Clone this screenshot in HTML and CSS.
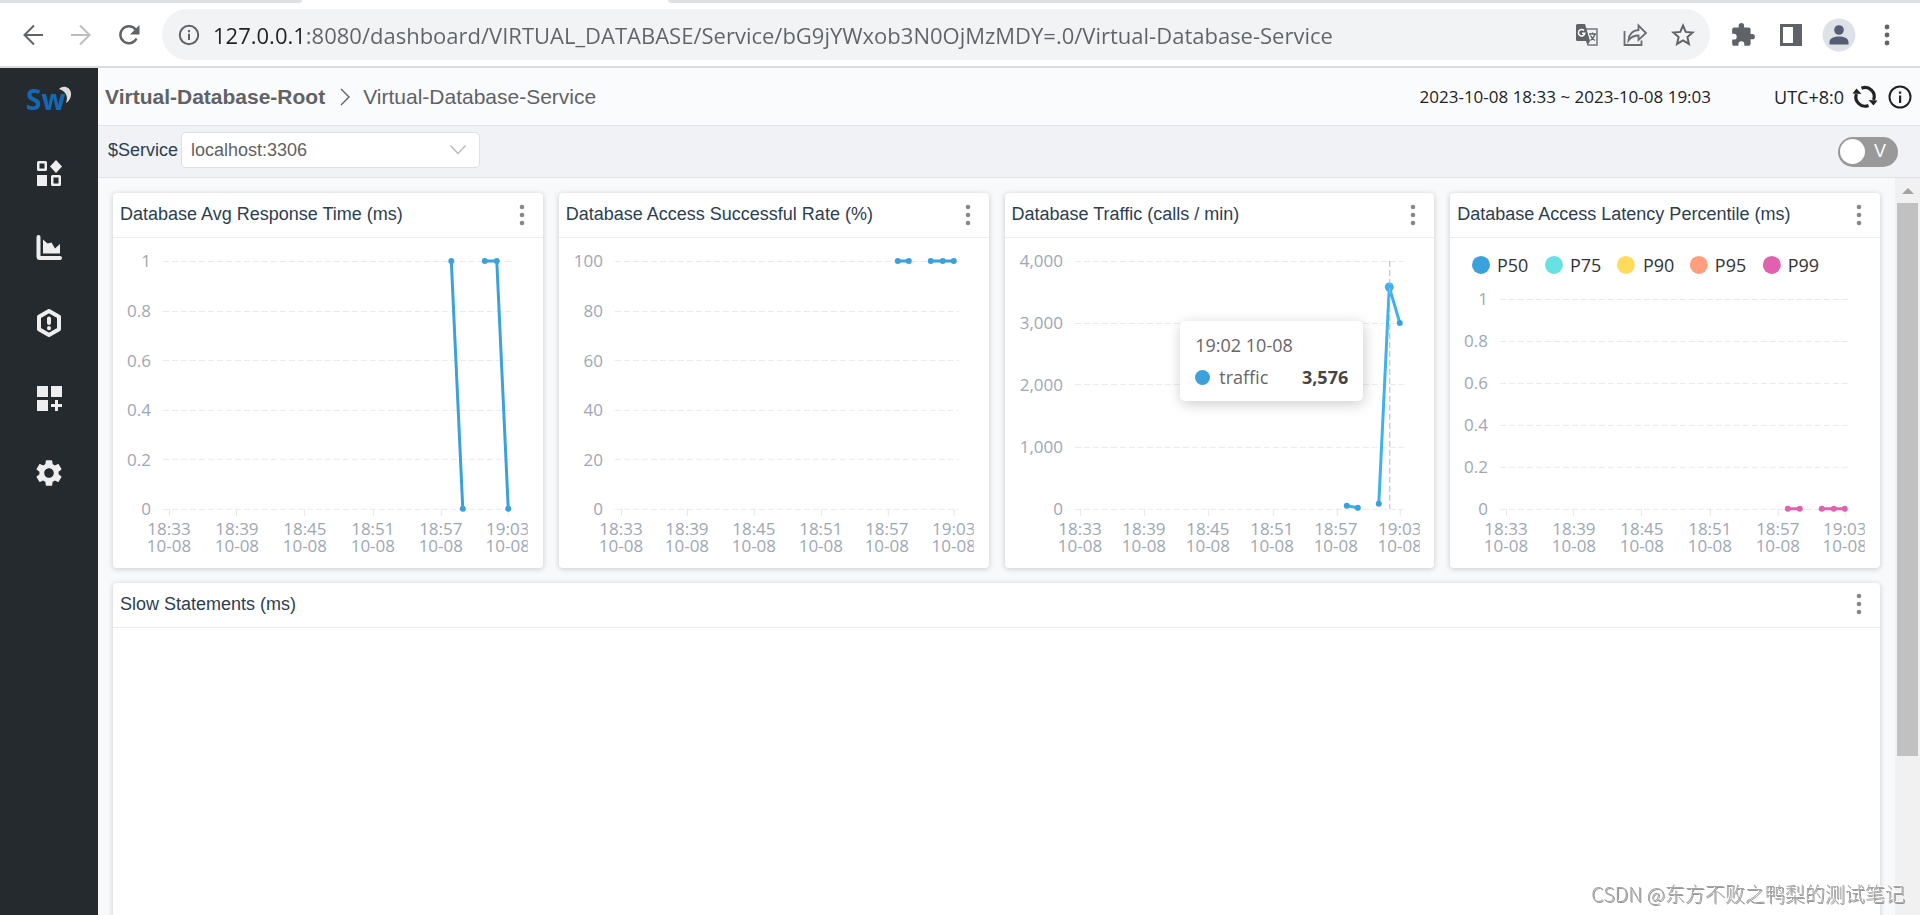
FILE: index.html
```html
<!DOCTYPE html>
<html lang="en">
<head>
<meta charset="utf-8">
<title>Virtual-Database-Service</title>
<link rel="stylesheet" href="styles.css">
</head>
<body>
<header class="browser">
  <div class="tabstrip"><div class="tab-side tab-left"></div><div class="tab-active"></div><div class="tab-side tab-right"></div></div>
  <div class="toolbar">
    <button class="tool" aria-label="Back"><svg width="24" height="24" viewBox="0 0 24 24" fill="none" stroke="#5f6368" stroke-width="2"><path d="M22 12H4M13 2.500L3.500 12l9.500 9.500"/></svg></button>
    <button class="tool" aria-label="Forward"><svg width="24" height="24" viewBox="0 0 24 24" fill="none" stroke="#bcbec1" stroke-width="2"><path d="M2 12h18M11 2.500L20.500 12 11 21.500"/></svg></button>
    <button class="tool" aria-label="Reload"><svg width="26" height="26" viewBox="0 0 26 26"><path d="M20.500 16.500A8.500 8.500 0 1 1 19.500 7.500" fill="none" stroke="#5f6368" stroke-width="2.400"/><path d="M23.500 3v9.500H14z" fill="#5f6368"/></svg></button>
    <div class="omnibox">
      <svg width="24" height="24" viewBox="0 0 24 24"><circle cx="12" cy="12" r="9.200" fill="none" stroke="#5f6368" stroke-width="2"/><path d="M11 10.800h2V17h-2zM11 7h2v2.200h-2z" fill="#5f6368"/></svg>
      <input class="url" aria-label="Address" value="127.0.0.1:8080/dashboard/VIRTUAL_DATABASE/Service/bG9jYWxob3N0OjMzMDY=.0/Virtual-Database-Service">
      <button class="tool" aria-label="Translate"><svg width="24" height="24" viewBox="0 0 24 24"><path d="M11 6h11v16H12.500" fill="none" stroke="#73777b" stroke-width="1.500"/><path d="M2.500 1H10l5 17H2.500A1.500 1.500 0 0 1 1 16.500v-14A1.500 1.500 0 0 1 2.500 1z" fill="#5f6368"/><path d="M15 18l-2.500 4.500L11 18z" fill="#5f6368"/><path d="M9 7.600a3.200 3.200 0 1 0 .8 2.600H7" fill="none" stroke="#fff" stroke-width="1.500"/><path d="M14 11h7M17.500 9.500V11M20 11c-.6 3-2.500 5-4.500 6.500M15.500 12.500c1 2.500 2.500 4 4.500 5" fill="none" stroke="#5f6368" stroke-width="1.300"/></svg></button>
      <button class="tool" aria-label="Share"><svg width="26" height="26" viewBox="0 0 26 26" fill="none" stroke="#6a6e72" stroke-width="1.800"><path d="M2.500 9v14h17v-4.500"/><path d="M6.500 18.500C7 12.500 10.500 8.500 16.500 8V3.500L24 11l-7.500 7v-4.500c-4.500 0-7.500 1.500-10 5z"/></svg></button>
      <button class="tool" aria-label="Bookmark"><svg width="26" height="26" viewBox="0 0 26 26" fill="none" stroke="#5f6368" stroke-width="2"><path d="M13 3.500l2.700 6.400 6.900.6-5.200 4.600 1.500 6.800-5.900-3.600-5.900 3.600 1.500-6.800-5.200-4.600 6.900-.6z"/></svg></button>
    </div>
    <button class="tool" aria-label="Extensions"><svg width="26" height="26" viewBox="0 0 24 24" fill="#5f6368"><path d="M20.500 11H19V7a2 2 0 0 0-2-2h-4V3.500a2.500 2.500 0 0 0-5 0V5H4a2 2 0 0 0-2 2v3.800h1.500a2.700 2.700 0 0 1 0 5.400H2V20a2 2 0 0 0 2 2h3.800v-1.500a2.700 2.700 0 0 1 5.400 0V22H17a2 2 0 0 0 2-2v-4h1.500a2.500 2.500 0 0 0 0-5z"/></svg></button>
    <button class="tool" aria-label="Side panel"><svg width="22" height="22" viewBox="0 0 22 22"><path d="M0 0h22v22H0zM3 3v16h10V3z" fill="#5f6368" fill-rule="evenodd"/></svg></button>
    <button class="tool" aria-label="Profile"><svg width="34" height="34" viewBox="0 0 34 34"><circle cx="17" cy="17" r="16.500" fill="#dee1e8"/><circle cx="17" cy="12" r="4.800" fill="#545d73"/><path d="M7.500 26.500V24c0-3.800 5-5.500 9.500-5.500s9.500 1.700 9.500 5.500v2.500z" fill="#545d73"/></svg></button>
    <button class="tool" aria-label="Menu"><svg width="8" height="24" viewBox="0 0 8 24" fill="#5f6368"><circle cx="4" cy="4" r="2.400"/><circle cx="4" cy="12" r="2.400"/><circle cx="4" cy="20" r="2.400"/></svg></button>
  </div>
</header>
<div class="app">
  <nav class="sidebar" aria-label="Main">
    <a class="logo" href="#" aria-label="SkyWalking"><svg width="48" height="44" viewBox="0 0 48 44"><text class="logo-text" x="1" y="32">Sw</text><path d="M34 11c4-4 11-2.500 12 4 .4 4-1.500 8-5 10 2.500-6 0-12-7-14z" fill="#dcdcdc"/></svg></a>
    <a class="side-link" href="#" aria-label="Dashboards"><svg width="26" height="26" viewBox="0 0 26 26" fill="#eee"><path d="M2.500 1h7A1.500 1.500 0 0 1 11 2.500v7A1.500 1.500 0 0 1 9.500 11h-7A1.500 1.500 0 0 1 1 9.500v-7A1.500 1.500 0 0 1 2.500 1zM3.500 3.500v5h5v-5z" fill-rule="evenodd"/><path d="M20 0l6 6.500-6 6.500-6-6.500z"/><path d="M1 15h10v11H1z"/><path d="M16.500 15h7a1.500 1.500 0 0 1 1.500 1.500v8a1.500 1.500 0 0 1-1.500 1.500h-7a1.500 1.500 0 0 1-1.500-1.500v-8a1.500 1.500 0 0 1 1.500-1.500zM17.500 17.500v6h5v-6z" fill-rule="evenodd"/></svg></a>
    <a class="side-link" href="#" aria-label="Metrics"><svg width="26" height="26" viewBox="0 0 26 26" fill="#eee"><path d="M2.500 2v19.500a1.500 1.500 0 0 0 1.500 1.500h20" fill="none" stroke="#eee" stroke-width="4" stroke-linecap="round"/><path d="M7 4.500L11.500 8.500l4-1 3.500 6 5-4.500v9.500H7z"/></svg></a>
    <a class="side-link" href="#" aria-label="Alerting"><svg width="26" height="30" viewBox="0 0 26 30"><path d="M13 3l10 5.800v12.400L13 27 3 21.200V8.800z" fill="none" stroke="#eee" stroke-width="4" stroke-linejoin="round"/><path d="M13 10.500v4.500M13 20v.2" stroke="#eee" stroke-width="4" stroke-linecap="round"/></svg></a>
    <a class="side-link" href="#" aria-label="Marketplace"><svg width="26" height="26" viewBox="0 0 26 26" fill="#eee"><path d="M1 1h11v11H1zM15 1h11v11H15zM1 15h11v11H1zM19 15h3v4h4v3h-4v4h-3v-4h-4v-3h4z"/></svg></a>
    <a class="side-link" href="#" aria-label="Settings"><svg width="32" height="32" viewBox="0 0 24 24" fill="#eee"><path d="M19.140 12.940c.04-.3.060-.61.060-.94 0-.32-.02-.64-.07-.94l2.030-1.580c.18-.14.230-.41.120-.61l-1.920-3.320c-.12-.22-.37-.29-.59-.22l-2.390.96c-.5-.38-1.030-.7-1.620-.94l-.36-2.540c-.04-.24-.24-.41-.48-.41h-3.840c-.24 0-.43.170-.47.410l-.36 2.540c-.59.240-1.130.570-1.620.94l-2.390-.96c-.22-.08-.47 0-.59.220L2.740 8.870c-.12.210-.08.470.120.610l2.030 1.580c-.05.300-.09.630-.09.940s.02.640.070.940l-2.030 1.580c-.18.140-.23.410-.12.610l1.920 3.320c.12.220.370.290.590.220l2.390-.96c.5.380 1.030.700 1.620.940l.36 2.540c.05.240.24.410.48.410h3.840c.24 0 .44-.17.470-.41l.36-2.540c.59-.24 1.130-.56 1.620-.94l2.390.96c.22.080.470 0 .590-.22l1.920-3.320c.12-.22.070-.47-.12-.61l-2.010-1.580zM12 15.600c-1.980 0-3.600-1.620-3.600-3.600s1.620-3.600 3.600-3.600 3.600 1.620 3.600 3.600-1.620 3.600-3.600 3.600z"/></svg></a>
  </nav>
  <main class="main">
    <div class="titlebar">
      <a class="crumb-root" href="#">Virtual-Database-Root</a>
      <svg width="12" height="18" viewBox="0 0 12 18" fill="none" stroke="#606266" stroke-width="1.400"><path d="M2 1l8 8-8 8"/></svg>
      <span class="crumb">Virtual-Database-Service</span>
      <span class="range">2023-10-08 18:33 ~ 2023-10-08 19:03</span>
      <span class="utc">UTC+8:0</span>
      <button class="icon-btn" aria-label="Refresh"><svg width="26" height="26" viewBox="0 0 26 26" fill="none" stroke="#222" stroke-width="3.200"><path d="M9.500 4.200A9.200 9.200 0 0 1 21.600 16M16.500 21.500A9.200 9.200 0 0 1 4.400 10"/><path d="M16.500 16l9 .5-4 5zM9.500 10l-9-.5 4-5z" fill="#222" stroke="none"/></svg></button>
      <button class="icon-btn" aria-label="Info"><svg width="24" height="24" viewBox="0 0 24 24"><circle cx="12" cy="12" r="10.500" fill="none" stroke="#222" stroke-width="2"/><path d="M11 10.500h2.200V18H11zM11 6.500h2.200v2.300H11z" fill="#222"/></svg></button>
    </div>
    <div class="filters">
      <label for="service">$Service</label>
      <div class="select-wrap">
        <select id="service" class="select"><option>localhost:3306</option></select>
        <svg class="caret" width="18" height="12" viewBox="0 0 18 12" fill="none" stroke="#b4b8bf" stroke-width="1.300"><path d="M1.500 1.500L9 9.500l7.500-8"/></svg>
      </div>
      <label class="switch"><input type="checkbox" role="switch" aria-label="View mode"><span class="knob"></span><span>V</span></label>
    </div>
    <div class="scroller">
      <div class="board">
        <section class="card">
          <div class="card-head"><h2>Database Avg Response Time (ms)</h2><button class="more" aria-label="More"><svg width="6" height="22" viewBox="0 0 6 22"><circle cx="3" cy="3" r="2.300"/><circle cx="3" cy="11" r="2.300"/><circle cx="3" cy="19" r="2.300"/></svg></button></div>
          <svg class="chart" viewBox="0 0 430 330">
            <path class="grid" d="M50 23.500H398M50 73.500H398M50 122.500H398M50 172.500H398M50 221.500H398M50 271.500H398"/>
            <path class="tick" d="M56.500 271v7M123.500 271v7M191.500 271v7M260.500 271v7M328.500 271v7M395.500 271v7"/>
            <g class="y"><text x="38" y="29">1</text><text x="38" y="79">0.8</text><text x="38" y="129">0.6</text><text x="38" y="178">0.4</text><text x="38" y="228">0.2</text><text x="38" y="277">0</text></g>
            <svg class="x" width="415" height="330"><text><tspan x="56" y="297">18:33</tspan><tspan x="56" y="314">10-08</tspan></text><text><tspan x="124" y="297">18:39</tspan><tspan x="124" y="314">10-08</tspan></text><text><tspan x="192" y="297">18:45</tspan><tspan x="192" y="314">10-08</tspan></text><text><tspan x="260" y="297">18:51</tspan><tspan x="260" y="314">10-08</tspan></text><text><tspan x="328" y="297">18:57</tspan><tspan x="328" y="314">10-08</tspan></text><text><tspan x="395" y="297">19:03</tspan><tspan x="395" y="314">10-08</tspan></text></svg>
            <path class="line blue" d="M338.500 23L350 271M372 23h12L395.500 271"/>
            <g class="dot blue"><circle cx="338.500" cy="23" r="3"/><circle cx="350" cy="271" r="3"/><circle cx="372" cy="23" r="3"/><circle cx="384" cy="23" r="3"/><circle cx="395.500" cy="271" r="3"/></g>
          </svg>
        </section>
        <section class="card">
          <div class="card-head"><h2>Database Access Successful Rate (%)</h2><button class="more" aria-label="More"><svg width="6" height="22" viewBox="0 0 6 22"><circle cx="3" cy="3" r="2.300"/><circle cx="3" cy="11" r="2.300"/><circle cx="3" cy="19" r="2.300"/></svg></button></div>
          <svg class="chart" viewBox="0 0 430 330">
            <path class="grid" d="M56 23.500H400M56 73.500H400M56 122.500H400M56 172.500H400M56 221.500H400M56 271.500H400"/>
            <path class="tick" d="M62.500 271v7M128.500 271v7M195.500 271v7M262.500 271v7M329.500 271v7M395.500 271v7"/>
            <g class="y"><text x="44" y="29">100</text><text x="44" y="79">80</text><text x="44" y="129">60</text><text x="44" y="178">40</text><text x="44" y="228">20</text><text x="44" y="277">0</text></g>
            <svg class="x" width="415" height="330"><text><tspan x="62" y="297">18:33</tspan><tspan x="62" y="314">10-08</tspan></text><text><tspan x="128" y="297">18:39</tspan><tspan x="128" y="314">10-08</tspan></text><text><tspan x="195" y="297">18:45</tspan><tspan x="195" y="314">10-08</tspan></text><text><tspan x="262" y="297">18:51</tspan><tspan x="262" y="314">10-08</tspan></text><text><tspan x="328" y="297">18:57</tspan><tspan x="328" y="314">10-08</tspan></text><text><tspan x="395" y="297">19:03</tspan><tspan x="395" y="314">10-08</tspan></text></svg>
            <path class="line blue" d="M339 23h11M372 23h23"/>
            <g class="dot blue"><circle cx="339" cy="23" r="3"/><circle cx="350" cy="23" r="3"/><circle cx="372" cy="23" r="3"/><circle cx="384" cy="23" r="3"/><circle cx="395" cy="23" r="3"/></g>
          </svg>
        </section>
        <section class="card">
          <div class="card-head"><h2>Database Traffic (calls / min)</h2><button class="more" aria-label="More"><svg width="6" height="22" viewBox="0 0 6 22"><circle cx="3" cy="3" r="2.300"/><circle cx="3" cy="11" r="2.300"/><circle cx="3" cy="19" r="2.300"/></svg></button></div>
          <svg class="chart" viewBox="0 0 430 330">
            <path class="grid" d="M70 23.500H399M70 85.500H399M70 146.500H399M70 209.500H399M70 271.500H399"/>
            <path class="tick" d="M75.500 271v7M139.500 271v7M203.500 271v7M268.500 271v7M332.500 271v7M395.500 271v7"/>
            <g class="y"><text x="58" y="29">4,000</text><text x="58" y="91">3,000</text><text x="58" y="153">2,000</text><text x="58" y="215">1,000</text><text x="58" y="277">0</text></g>
            <svg class="x" width="415" height="330"><text><tspan x="75" y="297">18:33</tspan><tspan x="75" y="314">10-08</tspan></text><text><tspan x="139" y="297">18:39</tspan><tspan x="139" y="314">10-08</tspan></text><text><tspan x="203" y="297">18:45</tspan><tspan x="203" y="314">10-08</tspan></text><text><tspan x="267" y="297">18:51</tspan><tspan x="267" y="314">10-08</tspan></text><text><tspan x="331" y="297">18:57</tspan><tspan x="331" y="314">10-08</tspan></text><text><tspan x="395" y="297">19:03</tspan><tspan x="395" y="314">10-08</tspan></text></svg>
            <path class="line bright" d="M342 268l11 2M374 266L384.500 49 395 85"/>
            <g class="dot blue"><circle cx="342" cy="268" r="3"/><circle cx="353" cy="270" r="3"/><circle cx="374" cy="266" r="3"/><circle cx="395" cy="85" r="3"/></g>
            <circle cx="384.500" cy="49" r="4.500" fill="#3fb1ed"/>
            <path class="pointer" d="M385 23v248"/>
          </svg>
          <div class="tooltip"><div>19:02 10-08</div><div class="tip-row"><span class="tip-dot"></span><span>traffic</span><b>3,576</b></div></div>
        </section>
        <section class="card">
          <div class="card-head"><h2>Database Access Latency Percentile (ms)</h2><button class="more" aria-label="More"><svg width="6" height="22" viewBox="0 0 6 22"><circle cx="3" cy="3" r="2.300"/><circle cx="3" cy="11" r="2.300"/><circle cx="3" cy="19" r="2.300"/></svg></button></div>
          <svg class="chart" viewBox="0 0 430 330">
            <circle cx="31" cy="27" r="9" fill="#3aa1db"/><circle cx="104" cy="27" r="9" fill="#67e1e4"/><circle cx="176" cy="27" r="9" fill="#ffdb5c"/><circle cx="249" cy="27" r="9" fill="#ff9f7f"/><circle cx="322" cy="27" r="9" fill="#e062ae"/>
            <g class="legend"><text x="47" y="34">P50</text><text x="120" y="34">P75</text><text x="193" y="34">P90</text><text x="265" y="34">P95</text><text x="338" y="34">P99</text></g>
            <path class="grid" d="M50 61.500H398M50 103.500H398M50 145.500H398M50 187.500H398M50 229.500H398M50 271.500H398"/>
            <path class="tick" d="M56.500 271v7M123.500 271v7M191.500 271v7M260.500 271v7M328.500 271v7M395.500 271v7"/>
            <g class="y"><text x="38" y="67">1</text><text x="38" y="109">0.8</text><text x="38" y="151">0.6</text><text x="38" y="193">0.4</text><text x="38" y="235">0.2</text><text x="38" y="277">0</text></g>
            <svg class="x" width="415" height="330"><text><tspan x="56" y="297">18:33</tspan><tspan x="56" y="314">10-08</tspan></text><text><tspan x="124" y="297">18:39</tspan><tspan x="124" y="314">10-08</tspan></text><text><tspan x="192" y="297">18:45</tspan><tspan x="192" y="314">10-08</tspan></text><text><tspan x="260" y="297">18:51</tspan><tspan x="260" y="314">10-08</tspan></text><text><tspan x="328" y="297">18:57</tspan><tspan x="328" y="314">10-08</tspan></text><text><tspan x="395" y="297">19:03</tspan><tspan x="395" y="314">10-08</tspan></text></svg>
            <path class="line pink" d="M338 271h12M372 271h23"/>
            <g class="dot pink"><circle cx="338" cy="271" r="3"/><circle cx="350" cy="271" r="3"/><circle cx="372" cy="271" r="3"/><circle cx="384" cy="271" r="3"/><circle cx="395" cy="271" r="3"/></g>
          </svg>
        </section>
        <section class="card wide">
          <div class="card-head"><h2>Slow Statements (ms)</h2><button class="more" aria-label="More"><svg width="6" height="22" viewBox="0 0 6 22"><circle cx="3" cy="3" r="2.300"/><circle cx="3" cy="11" r="2.300"/><circle cx="3" cy="19" r="2.300"/></svg></button></div>
        </section>
      </div>
      <div class="scrollbar"><svg width="12" height="6" viewBox="0 0 12 6" fill="#a3a3a3"><path d="M6 0l6 6H0z"/></svg><div class="thumb"></div></div>
    </div>
  </main>
</div>
<div class="watermark">CSDN @东方不败之鸭梨的测试笔记</div>
</body>
</html>
```
FILE: styles.css
```css
* { box-sizing: border-box; }
body {
  margin: 0;
  height: 100vh;
  display: flex;
  flex-direction: column;
  overflow: hidden;
  background: #fff;
  font-family: "Liberation Sans", Arial, sans-serif;
  font-size: 18px;
  color: #2c3e50;
}
button { border: 0; padding: 0; background: none; display: flex; align-items: center; justify-content: center; }
a { color: inherit; text-decoration: none; }
svg { flex: none; }

/* browser chrome */
.browser { flex: none; border-bottom: 2px solid #dadce0; background: #fff; }
.tabstrip { display: flex; height: 3px; }
.tab-side { background: #dee1e6; }
.tab-left { width: 302px; border-bottom-right-radius: 3px; }
.tab-active { width: 366px; }
.tab-right { flex: 1; border-bottom-left-radius: 3px; }
.toolbar { display: flex; align-items: center; padding: 6px 9px; }
.tool { width: 48px; height: 48px; flex: none; }
.omnibox {
  flex: 1;
  min-width: 0;
  display: flex;
  align-items: center;
  height: 51px;
  margin: 0 9px;
  padding: 0 3px 0 15px;
  border-radius: 26px;
  background: #f1f3f4;
}
.url {
  flex: 1;
  min-width: 0;
  height: 40px;
  margin-left: 12px;
  padding: 0;
  border: 0;
  outline: 0;
  font: 22px "Open Sans", sans-serif;
  color: transparent;
  background: linear-gradient(90deg, #202124 91px, #5f6368 91px);
  -webkit-background-clip: text;
  background-clip: text;
}

/* app frame */
.app { flex: 1; min-height: 0; display: flex; }
.sidebar { width: 98px; flex: none; padding-right: 1px; background: #252a2f; }
.logo { display: flex; justify-content: center; height: 67px; padding-top: 10px; }
.logo-text { font: bold 28px "Open Sans", sans-serif; fill: #1369b5; }
.side-link { display: flex; align-items: center; justify-content: center; height: 75px; }
.main { flex: 1; min-width: 0; display: flex; flex-direction: column; }

.titlebar {
  display: flex;
  align-items: center;
  height: 58px;
  flex: none;
  padding: 0 8px 0 7px;
  border-bottom: 1px solid #dfe2e6;
  background: #fafbfd;
  font-size: 21px;
  color: #606266;
}
.crumb-root { font-weight: bold; margin-right: 14px; }
.crumb { margin-left: 12px; flex: 1; }
.range, .utc { font: 17px "Open Sans", sans-serif; color: #222; }
.range { margin-right: 63px; }
.utc { margin-right: 8px; font-size: 18px; }
.icon-btn + .icon-btn { margin-left: 10px; }

.filters {
  display: flex;
  align-items: center;
  height: 52px;
  flex: none;
  padding: 0 22px 3px 10px;
  border-bottom: 1px solid #dfe2e6;
  background: #f0f2f5;
}
.select-wrap { position: relative; margin-left: 3px; }
.select {
  appearance: none;
  width: 299px;
  height: 36px;
  padding: 0 36px 0 9px;
  border: 1px solid #dcdfe6;
  border-radius: 5px;
  background: #fff;
  font: 18px "Liberation Sans", Arial, sans-serif;
  color: #606266;
}
.caret { position: absolute; right: 13px; top: 12px; pointer-events: none; }
.switch {
  display: flex;
  align-items: center;
  gap: 9px;
  width: 60px;
  height: 30px;
  margin: 3px 0 0 auto;
  padding: 0 2px;
  border-radius: 15px;
  background: #999;
  color: #fff;
}
.switch input { position: absolute; opacity: 0; }
.knob { width: 25px; height: 25px; border-radius: 50%; background: #fff; }

/* dashboard */
.scroller { flex: 1; min-height: 0; display: flex; background: #f7f9fa; }
.board {
  flex: 1;
  min-width: 0;
  display: grid;
  grid-template-columns: repeat(4, minmax(0, 1fr));
  grid-template-rows: auto 500px;
  gap: 15px 16px;
  align-content: start;
  padding: 15px 15px 0;
  overflow: hidden;
}
.card {
  position: relative;
  border-radius: 4px;
  background: #fff;
  box-shadow: 0 1px 5px 1px rgba(0, 0, 0, 0.14);
}
.wide { grid-column: 1 / -1; }
.card-head {
  display: flex;
  align-items: center;
  justify-content: space-between;
  height: 45px;
  padding: 0 18px 1px 7px;
  border-bottom: 1px solid #ebeced;
}
.card-head h2 { margin: 0; font-size: 18px; font-weight: normal; white-space: nowrap; }
.more svg { fill: #888; }
.chart { display: block; width: 100%; height: auto; font: 17px "Open Sans", sans-serif; }
.grid { fill: none; stroke: #e9eaec; stroke-dasharray: 6 3; }
.tick { fill: none; stroke: #e4e7ec; }
.y text { fill: #9ea7b4; text-anchor: end; }
.x { overflow: hidden; }
.x text { fill: #9ea7b4; text-anchor: middle; }
.legend text { fill: #333; font-size: 18px; }
.line { fill: none; stroke-width: 3; stroke-linejoin: bevel; }
.line.blue { stroke: #3aa1db; }
.line.bright { stroke: #3fb1ed; }
.line.pink { stroke: #e062ae; }
.dot.blue { fill: #3aa1db; }
.dot.pink { fill: #e062ae; }
.pointer { stroke: #b3b8c2; stroke-dasharray: 6 3; }
.tooltip {
  position: absolute;
  right: 71px;
  top: 128px;
  width: 183px;
  padding: 12px 15px;
  border-radius: 5px;
  background: #fff;
  box-shadow: 1px 3px 14px rgba(0, 0, 0, 0.2);
  font: 18px/24px "Open Sans", sans-serif;
  color: #666;
}
.tip-row { display: flex; align-items: center; margin-top: 8px; }
.tip-dot { width: 15px; height: 15px; margin-right: 9px; border-radius: 50%; background: #3aa1db; }
.tip-row b { margin-left: auto; color: #464646; }

.scrollbar {
  width: 25px;
  flex: none;
  display: flex;
  flex-direction: column;
  align-items: center;
  padding-top: 10px;
  background: #f1f1f1;
}
.thumb { width: 21px; height: 76%; margin-top: 9px; background: #c1c1c1; }

.watermark {
  position: fixed;
  right: 15px;
  bottom: 6px;
  font: 300 20px/30px "Noto Sans CJK SC", sans-serif;
  color: #a5a5a5;
  text-shadow: -1px -1px 0 #fff, 1px 1px 0 #999;
}
```
